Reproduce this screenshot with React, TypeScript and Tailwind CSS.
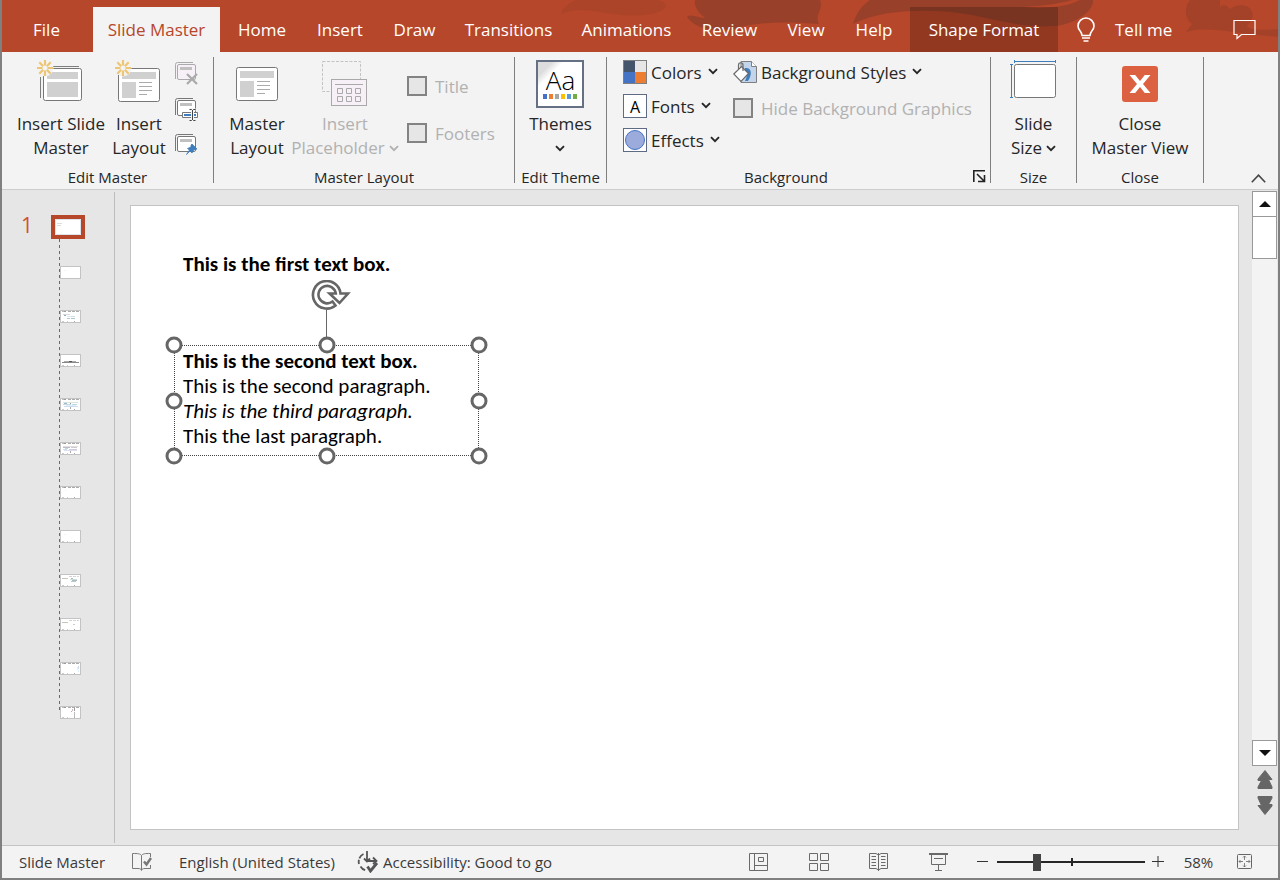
import type { ReactNode } from 'react'
import clsx from 'clsx'

const tabs = [
    { name: 'Home', width: 'w-20' },
    { name: 'Insert', width: 'w-[76px]' },
    { name: 'Draw', width: 'w-[73px]' },
    { name: 'Transitions', width: 'w-[115px]' },
    { name: 'Animations', width: 'w-[121px]' },
    { name: 'Review', width: 'w-[85px]' },
    { name: 'View', width: 'w-[68px]' },
    { name: 'Help', width: 'w-[68px]' },
]

// Tiny marks drawn on each layout thumbnail: x, y, width, height, colour
type Mark = [number, number, number, number, string]

const header: Mark[] = [
    [1, 0, 2, 1, '#bbb'],
    [3, 0, 2, 1, '#999'],
    [7, 0, 3, 1, '#aaa'],
    [11, 0, 3, 1, '#aaa'],
    [15, 0, 3, 1, '#aaa'],
]
const footer: Mark[] = [
    [1, 10, 2, 1, '#ccc'],
    [6, 10, 1, 1, '#ccc'],
    [13, 10, 1, 1, '#aaa'],
]
const topRight: Mark[] = [
    [8, 1, 3, 1, '#d4d4d8'],
    [12, 1, 3, 1, '#d4d4d8'],
    [16, 1, 2, 1, '#d4d4d8'],
]

const layouts: { name: string; marks: Mark[] }[] = [
    { name: 'Title Slide', marks: [[3, 3, 2, 1, '#f4f4f4']] },
    {
        name: 'Title and Content',
        marks: [...header, [2, 3, 7, 1, '#d8d8d8'], [3, 4, 2, 1, '#8ab'], [6, 5, 4, 1, '#dee8ee'], [10, 5, 4, 1, '#cde0e0'], [6, 7, 3, 1, '#acc8d8'], [10, 7, 4, 1, '#abc8d8'], ...footer],
    },
    {
        name: 'Section Header',
        marks: [[3, 6, 12, 1, '#aaa'], [1, 7, 17, 1, '#888'], [8, 6, 3, 1, '#555'], ...footer],
    },
    {
        name: 'Two Content',
        marks: [...header, [2, 3, 15, 1, '#d8e4e0'], [3, 4, 3, 1, '#9bc'], [9, 4, 1, 1, '#999'], [2, 5, 8, 1, '#cdd8e0'], [11, 5, 5, 1, '#bcd8dc'], [5, 6, 10, 1, '#def'], [3, 7, 14, 1, '#cde'], [9, 8, 1, 2, '#aaa'], ...footer],
    },
    {
        name: 'Comparison',
        marks: [...header, [2, 3, 15, 1, '#e8dddd'], [2, 4, 7, 1, '#bbc'], [10, 4, 6, 1, '#ccc'], [4, 5, 3, 1, '#bcd8e0'], [2, 6, 4, 1, '#cde'], [8, 6, 8, 1, '#ccd'], [3, 7, 13, 1, '#dde'], [9, 8, 1, 2, '#aaa'], ...footer],
    },
    { name: 'Title Only', marks: [...header, [4, 3, 1, 1, '#eee'], ...footer] },
    { name: 'Blank', marks: [[3, 3, 2, 1, '#f4f4f4'], ...footer] },
    {
        name: 'Content with Caption',
        marks: [...topRight, [1, 3, 6, 1, '#c8c6b8'], [10, 3, 2, 1, '#bba'], [9, 4, 7, 1, '#cdd'], [11, 5, 5, 1, '#abb8c0'], [10, 6, 5, 1, '#bcc'], ...footer],
    },
    { name: 'Picture with Caption', marks: [...topRight, [1, 3, 6, 1, '#c8c6b8'], [12, 5, 2, 1, '#ccc'], ...footer] },
    {
        name: 'Title and Vertical Text',
        marks: [...header, [17, 3, 1, 3, '#cde'], [16, 4, 1, 3, '#def'], [17, 7, 1, 2, '#def'], ...footer],
    },
    {
        name: 'Vertical Title and Text',
        marks: [...header, [11, 2, 1, 2, '#cbb'], [10, 4, 1, 1, '#baa'], [13, 1, 1, 3, '#999'], [13, 5, 1, 5, '#bbb'], ...footer],
    },
]

const handles = [
    'left-0 top-0',
    'left-1/2 top-0',
    'left-full top-0',
    'left-0 top-1/2',
    'left-full top-1/2',
    'left-0 top-full',
    'left-1/2 top-full',
    'left-full top-full',
]

function Chevron({ className }: { className?: string }) {
    return (
        <svg viewBox="0 0 10 8" className={clsx('inline-block h-2 w-2.5', className)} fill="none" stroke="currentColor" strokeWidth="1.9">
            <path d="M1 1.2 5 5.2 9 1.2" />
        </svg>
    )
}

function Spark() {
    return (
        <g stroke="#edc674" strokeWidth="2.2">
            <path d="M8 0v5.500M8 10.500V16M0 8h5.500M10.500 8H16M2.300 2.300 6.200 6.200M9.800 9.800 13.700 13.700M13.700 2.300 9.800 6.200M6.200 9.800 2.300 13.700" />
        </g>
    )
}

function InsertMasterIcon() {
    return (
        <svg viewBox="0 0 48 48" className="size-12" fill="none">
            <path d="M16 6.500H42M3.500 17V38" stroke="#7f7f7f" />
            <rect x="6.500" y="8.500" width="38" height="32" rx="2" fill="#fff" stroke="#777" />
            <path d="M10 12H41V19H10ZM10 22H41V37H10Z" fill="#d0d0d0" />
            <circle cx="8" cy="8" r="8.500" fill="#f3f3f3" />
            <Spark />
        </svg>
    )
}

function LayoutArt() {
    return (
        <>
            <rect x=".5" y=".5" width="41" height="33" rx="2" fill="#fff" stroke="#777" />
            <path d="M4 4H38V11H4ZM4 14H18V30H4Z" fill="#d0d0d0" />
            <path d="M21 14.500H34M21 18.500H34M21 22.500H34M21 26.500H29" stroke="#ababab" />
        </>
    )
}

function InsertLayoutIcon() {
    return (
        <svg viewBox="0 0 48 48" className="size-12" fill="none">
            <g transform="translate(3 8)">
                <LayoutArt />
            </g>
            <circle cx="8" cy="8" r="8.500" fill="#f3f3f3" />
            <Spark />
        </svg>
    )
}

function PlaceholderIcon() {
    return (
        <svg viewBox="0 0 48 48" className="size-12" fill="none">
            <rect x="1.500" y="1.500" width="38" height="30" stroke="#c3c3c3" strokeDasharray="3 1.500" />
            <rect x="10.500" y="19.500" width="35" height="26" fill="#f7f1f7" stroke="#a9a9a9" />
            <path d="M14 24.500H42" stroke="#a9a9a9" />
            <path d="M16.500 28.500h5v5h-5zM25.500 28.500h5v5h-5zM34.500 28.500h5v5h-5zM16.500 36.500h5v5h-5zM25.500 36.500h5v5h-5zM34.500 36.500h5v5h-5z" stroke="#a9a9a9" />
        </svg>
    )
}

function StackedSlides({ color, children, label, disabled }: { color: string; children: ReactNode; label: string; disabled?: boolean }) {
    return (
        <button aria-label={label} disabled={disabled}>
            <svg viewBox="0 0 24 24" className="block size-6" fill="none">
                <path d="M.500 17V2.500A2 2 0 0 1 2.500.500H18" stroke={color} />
                <rect x="2.500" y="2.500" width="18" height="15" rx="1.500" fill={disabled ? '#f7f1f7' : '#fff'} stroke={color} />
                <path d="M5 5h12v3H5z" fill="#c0c0c0" />
                {children}
            </svg>
        </button>
    )
}

function BigButton({ icon, lines, className, arrow, disabled }: { icon: ReactNode; lines: string[]; className?: string; arrow?: boolean; disabled?: boolean }) {
    return (
        <button disabled={disabled} className={clsx('flex flex-col items-center text-[17px] leading-6 whitespace-nowrap disabled:text-[#b1b1b1]', className)}>
            <span className="mb-1 flex h-12 items-center justify-center">{icon}</span>
            {lines.map((line, i) => (
                <span key={i}>
                    {line}
                    {arrow && i === lines.length - 1 && <Chevron className={line ? 'ml-1 align-middle' : 'align-middle'} />}
                </span>
            ))}
        </button>
    )
}

function SmallButton({ icon, label }: { icon: ReactNode; label: string }) {
    return (
        <button className="flex h-6 items-center gap-1 text-[17px] leading-6 whitespace-nowrap">
            {icon}
            <span className="pt-0.5">{label}</span>
            <Chevron className="ml-0.5" />
        </button>
    )
}

function Check({ label }: { label: string }) {
    return (
        <label className="flex h-6 items-center gap-2 text-[17px] leading-6 whitespace-nowrap text-[#b1b1b1]">
            <input type="checkbox" disabled className="size-5 shrink-0 appearance-none border-2 border-[#838383] bg-[#e6e6e6]" />
            <span className="pt-0.5">{label}</span>
        </label>
    )
}

function Group({ name, className, children, launcher }: { name: string; className: string; children: ReactNode; launcher?: boolean }) {
    return (
        <section aria-label={name} className={clsx('flex shrink-0 flex-col border-r border-[#7f7f7f]', className)}>
            <div className="flex h-[113px] items-start pt-[3px]">{children}</div>
            <div className="flex h-[13px] items-center">
                <h2 className="flex-1 text-center text-[15px] leading-4 whitespace-nowrap">{name}</h2>
                {launcher && (
                    <button aria-label="Format Background" className="mr-1 ml-2">
                        <svg viewBox="0 0 13 13" className="block size-[13px]" fill="none" stroke="#222" strokeWidth="1.600">
                            <path d="M.8 12V.8H12M4 4l7 7M11.500 5v6.500H5" />
                        </svg>
                    </button>
                )}
            </div>
        </section>
    )
}

function TitleBar() {
    return (
        <header className="relative h-13 overflow-hidden bg-[#b7472a] text-white">
            <svg viewBox="560 0 716 52" className="absolute top-0 right-0 h-13 w-[716px]" fill="#98402a">
                <path d="M560 10C566 4 572 0 575 0H655C670 3 664 11 650 14C630 18 610 14 590 11C575 9 566 11 560 14Z" opacity=".35" />
                <path d="M693 0H818C822 9 812 15 817 24C790 22 760 21 735 28C715 34 693 29 685 17C688 13 697 18 703 18C695 11 692 6 693 0Z" />
                <path d="M868 0H1091C1092 9 1080 20 1060 25C1030 30 1000 21 970 15C930 8 880 9 851 24C854 14 859 6 868 0Z" />
                <path d="M1020 7C1045 9 1065 7 1078 0H1070C1055 4 1040 6 1020 7Z" fill="#b7472a" />
                <path d="M1188 0C1180 10 1185 21 1190 24L1184 32C1205 25 1235 34 1276 37V29C1265 30 1248 31 1245 26C1256 15 1249 5 1239 5C1233 5 1230 8 1228 9C1224 4 1220 5 1218 7V0Z" opacity=".6" />
            </svg>
            <nav className="relative flex h-full items-end text-[17px] whitespace-nowrap">
                <button className="h-[45px] w-[91px] pr-0.5">File</button>
                <button className="h-[45px] w-[127px] bg-[#f3f3f3] text-[#b7472a]">Slide Master</button>
                {tabs.map((tab) => (
                    <button key={tab.name} className={clsx('h-[45px]', tab.width, tab.name === 'Home' && 'ml-0.5')}>
                        {tab.name}
                    </button>
                ))}
                <button className="ml-0.5 h-[45px] w-[148px] bg-black/20">Shape Format</button>
                <button className="ml-[19px] flex h-[45px] items-center gap-5">
                    <svg viewBox="0 0 18 25" className="h-[25px] w-[18px]" fill="none" stroke="#fff" strokeWidth="1.600">
                        <path d="M5 18.500C5 14 1 13.500 1 9A8 8 0 0 1 17 9C17 13.500 13 14 13 18.500ZM5 21H13M6.500 24H11.500" />
                    </svg>
                    Tell me
                </button>
                <button aria-label="Comments" className="mr-[22px] ml-auto flex h-[45px] items-center">
                    <svg viewBox="0 0 23 21" className="h-[21px] w-[23px]" fill="none" stroke="#fff" strokeWidth="1.200">
                        <path d="M1 1.500H22V15.500H8.500L4 19.500V15.500H1Z" />
                    </svg>
                </button>
            </nav>
        </header>
    )
}

function Ribbon() {
    return (
        <div className="flex h-[138px] border-b border-[#cdcdcd] bg-[#f3f3f3] pt-[5px] pb-1.5">
            <Group name="Edit Master" className="w-[212px]">
                <BigButton icon={<InsertMasterIcon />} lines={['Insert Slide', 'Master']} className="ml-3 w-[94px]" />
                <BigButton icon={<InsertLayoutIcon />} lines={['Insert', 'Layout']} className="w-[62px]" />
                <div className="ml-[5px] flex flex-col gap-3 pt-0.5">
                    <StackedSlides label="Delete Slide" color="#aaa" disabled>
                        <path d="M12 12 22 22M22 12 12 22" stroke="#aaa" strokeWidth="2.200" />
                    </StackedSlides>
                    <StackedSlides label="Rename" color="#777">
                        <path d="M7.500 14.500H22.500V19.500H7.500Z" fill="#fff" stroke="#777" />
                        <path d="M9 16H21V18H9Z" fill="#3f7dbd" />
                        <path d="M14.500 11.500H16.500L17.500 12.500 18.500 11.500H20.500M17.500 12V22M14.500 22.500H16.500L17.500 21.500 18.500 22.500H20.500" stroke="#f3f3f3" strokeWidth="3" />
                        <path d="M14.500 11.500H16.500L17.500 12.500 18.500 11.500H20.500M17.500 12V22M14.500 22.500H16.500L17.500 21.500 18.500 22.500H20.500" stroke="#444" />
                    </StackedSlides>
                    <StackedSlides label="Preserve" color="#777">
                        <path d="M17 10 22 15 20.500 15.500 19 15.500 17 19 15 17 11.500 20.500 14.500 16 12.500 14.500 16 13 16 11Z" fill="#3f7dbd" stroke="#3f7dbd" strokeWidth=".8" />
                    </StackedSlides>
                </div>
            </Group>
            <Group name="Master Layout" className="w-[301px]">
                <BigButton
                    icon={
                        <svg viewBox="0 0 42 34" className="h-[34px] w-[42px]" fill="none">
                            <LayoutArt />
                        </svg>
                    }
                    lines={['Master', 'Layout']}
                    className="ml-3 w-[62px]"
                />
                <BigButton icon={<PlaceholderIcon />} lines={['Insert', 'Placeholder']} arrow disabled className="w-[114px]" />
                <div className="ml-[5px] flex flex-col gap-[23px] pt-3.5">
                    <Check label="Title" />
                    <Check label="Footers" />
                </div>
            </Group>
            <Group name="Edit Theme" className="w-[92px] items-center">
                <BigButton
                    icon={
                        <span className="flex size-12 flex-col items-center border-2 border-[#667085] bg-[linear-gradient(135deg,#ddd_0_10px,#fff_18px)]">
                            <span className="h-8 font-['Open_Sans',sans-serif] text-[26px] leading-9 font-light text-black">Aa</span>
                            <svg viewBox="0 0 34 5" className="h-[5px] w-[34px]">
                                <path d="M0 0h4v5H0z" fill="#4472c4" />
                                <path d="M6 0h4v5H6z" fill="#ed7d31" />
                                <path d="M12 0h4v5h-4z" fill="#a5a5a5" />
                                <path d="M18 0h4v5h-4z" fill="#ffc000" />
                                <path d="M24 0h4v5h-4z" fill="#5b9bd5" />
                                <path d="M30 0h4v5h-4z" fill="#70ad47" />
                            </svg>
                        </span>
                    }
                    lines={['Themes', '']}
                    arrow
                    className="w-full"
                />
            </Group>
            <Group name="Background" className="w-[384px]" launcher>
                <div className="ml-4 flex w-[110px] flex-col items-start gap-2.5">
                    <SmallButton
                        label="Colors"
                        icon={
                            <svg viewBox="0 0 24 24" className="size-6">
                                <path d="M0 0h24v24H0z" fill="#7f7f7f" />
                                <path d="M1 1h11v11H1z" fill="#44546a" />
                                <path d="M12 1h11v11H12z" fill="#e7e6e6" />
                                <path d="M1 12h11v11H1z" fill="#4472c4" />
                                <path d="M12 12h11v11H12z" fill="#ed7d31" />
                            </svg>
                        }
                    />
                    <SmallButton label="Fonts" icon={<span className="size-6 border border-[#5f6b85] bg-white text-center text-base leading-6 text-black">A</span>} />
                    <SmallButton
                        label="Effects"
                        icon={
                            <svg viewBox="0 0 24 24" className="size-6">
                                <rect x=".5" y=".5" width="23" height="23" fill="#fff" stroke="#5f6b85" />
                                <circle cx="12" cy="12" r="9.500" fill="#9bacdc" stroke="#4472c4" />
                            </svg>
                        }
                    />
                </div>
                <div className="flex flex-col items-start gap-3">
                    <SmallButton
                        label="Background Styles"
                        icon={
                            <svg viewBox="0 0 24 24" className="size-6" fill="none">
                                <path d="M8 1.500H18.500L23.500 6.500V22.500H8Z" fill="#c3d5ea" stroke="#7f7f7f" />
                                <path d="M18.500 1.500V6.500H23.500" fill="#fff" stroke="#7f7f7f" />
                                <path d="M12 8C18 7 20 13 15 21H12C14 17 15 13 12 11Z" fill="#3f7dbd" />
                                <path d="M.800 14 8.500 6.500 15.500 13.500 8 21.500Z" fill="#fff" stroke="#6b6b6b" strokeWidth="1.200" />
                                <path d="M5.500 9V5C5.500 2 10 2 10 5V11" stroke="#6b6b6b" strokeWidth="1.200" />
                            </svg>
                        }
                    />
                    <Check label="Hide Background Graphics" />
                </div>
            </Group>
            <Group name="Size" className="w-[86px] items-center">
                <BigButton
                    icon={
                        <svg viewBox="1 1 48 48" className="size-12" fill="none">
                            <rect x="5.500" y="5.500" width="41" height="33" rx="2" fill="#fff" stroke="#777" />
                            <path d="M5.500 2.500H46.500M5.500 1V4M46.500 1V4M2.500 5.500V38.500M1 5.500H4M1 38.500H4" stroke="#3f7dbd" />
                        </svg>
                    }
                    lines={['Slide', 'Size']}
                    arrow
                    className="w-full"
                />
            </Group>
            <Group name="Close" className="w-[127px] items-center">
                <BigButton
                    icon={
                        <svg viewBox="0 0 36 36" className="size-9">
                            <rect width="36" height="36" rx="3" fill="#dc6141" />
                            <path d="M7.500 9H13.200L18 15 22.800 9H28.500L21 18 28.500 27H22.800L18 21 13.200 27H7.500L15 18Z" fill="#fff" />
                        </svg>
                    }
                    lines={['Close', 'Master View']}
                    className="w-full"
                />
            </Group>
            <button aria-label="Collapse the Ribbon" className="mr-3 ml-auto self-end">
                <svg viewBox="0 0 15 9" className="block h-[9px] w-[15px]" fill="none" stroke="#444" strokeWidth="1.600">
                    <path d="M.8 8.200 7.500 1.200 14.200 8.200" />
                </svg>
            </button>
        </div>
    )
}

function Thumbnails() {
    return (
        <aside className="my-0.5 flex w-[113px] shrink-0 gap-[18px] border-r border-[#bdbdbd] pt-[23px] pl-[19px]">
            <span className="h-6 w-3 text-[21px] leading-5 text-[#d0512e]">1</span>
            <div>
                <button aria-label="Slide Master" className="block h-6 w-[34px] border-4 border-[#b7472a] bg-white">
                    <svg viewBox="0 0 26 16" className="h-4 w-[26px]">
                        <path d="M.5.5h25v15H.5z" fill="none" stroke="#dfe3ec" />
                        <path d="M2 4h5v1H2zM2 6h4v1H2z" fill="#ddd" />
                    </svg>
                </button>
                <ul className="ml-2 flex flex-col gap-[31px] bg-[repeating-linear-gradient(to_bottom,#6a6a6a_0_3px,transparent_3px_6px)] bg-[length:1px_473px] bg-no-repeat pt-[27px] pl-px">
                    {layouts.map((layout) => (
                        <li key={layout.name} className="h-[13px]">
                            <button aria-label={layout.name} className="block h-[13px] w-[21px] border border-[#c3c3c3] bg-white">
                                <svg viewBox="0 0 19 11" className="h-[11px] w-[19px]" shapeRendering="crispEdges">
                                    {layout.marks.map(([x, y, w, h, fill], i) => (
                                        <rect key={i} x={x} y={y} width={w} height={h} fill={fill} />
                                    ))}
                                </svg>
                            </button>
                        </li>
                    ))}
                </ul>
            </div>
        </aside>
    )
}

function Slide() {
    return (
        <main className="relative mx-[15px] mr-[13px] my-[15px] flex-1 border border-[#c3c3c3] bg-white font-['Carlito','Lato',sans-serif] text-[21px] leading-[25px] text-black">
            <p className="absolute top-[46px] left-13 font-bold whitespace-nowrap">This is the first text box.</p>
            <div className="absolute top-[139px] left-[43px] h-[111px] w-[305px] border border-dotted border-[#444] pt-[3px] pl-2 whitespace-nowrap">
                <p className="font-bold">This is the second text box.</p>
                <p>This is the second paragraph.</p>
                <p className="italic">This is the third paragraph.</p>
                <p>This the last paragraph.</p>
                <svg viewBox="0 0 40 66" className="absolute bottom-full left-1/2 -ml-4 h-[66px] w-10" fill="none" stroke="#666">
                    <path d="M15.500 30V66" />
                    <path
                        d="M29.500 13.500A13.800 13.800 0 1 0 24.500 25.500L21.500 21.500A8.700 8.700 0 1 1 24.800 13.500H18.500L28.500 23 37 13.500Z"
                        fill="#fff"
                        strokeWidth="2.600"
                    />
                </svg>
                <div className="absolute -inset-px">
                    {handles.map((place) => (
                        <span key={place} className={clsx('absolute size-[17px] -translate-1/2 rounded-full border-3 border-[#666] bg-white', place)} />
                    ))}
                </div>
            </div>
        </main>
    )
}

function ScrollBar() {
    return (
        <div className="mr-px flex w-[25px] shrink-0 flex-col items-center pt-px pb-[30px]">
            <div className="flex w-full flex-1 flex-col bg-[#f3f3f3]">
                <button aria-label="Scroll up" className="flex h-[26px] items-center justify-center border border-[#999] bg-white">
                    <svg viewBox="0 0 12 6" className="h-1.5 w-3" fill="#111">
                        <path d="M0 6 6 0 12 6Z" />
                    </svg>
                </button>
                <div className="-mt-px h-[43px] border border-[#999] bg-white" />
                <button aria-label="Scroll down" className="mt-auto flex h-[26px] items-center justify-center border border-[#999] bg-white">
                    <svg viewBox="0 0 12 6" className="h-1.5 w-3" fill="#111">
                        <path d="M0 0H12L6 6Z" />
                    </svg>
                </button>
            </div>
            <button aria-label="Previous Slide" className="mt-1">
                <svg viewBox="0 0 16 19" className="block h-[19px] w-4" fill="#666" stroke="#666" strokeLinejoin="round">
                    <path d="M8 .500 15 9.500H11.500L15 17V18.500H1V17L4.500 10.500H1V9Z" />
                </svg>
            </button>
            <button aria-label="Next Slide" className="mt-[7px]">
                <svg viewBox="0 0 16 19" className="block h-[19px] w-4 rotate-180" fill="#666" stroke="#666" strokeLinejoin="round">
                    <path d="M8 .500 15 9.500H11.500L15 17V18.500H1V17L4.500 10.500H1V9Z" />
                </svg>
            </button>
        </div>
    )
}

function ViewButton({ label, children }: { label: string; children: ReactNode }) {
    return (
        <button aria-label={label} className="mr-10">
            <svg viewBox="0 0 20 20" className="block size-5" fill="none" stroke="#6a6a6a">
                {children}
            </svg>
        </button>
    )
}

function StatusBar() {
    return (
        <footer className="flex h-[33px] items-center border-t border-[#c3c3c3] bg-[#f3f3f3] pr-[25px] pl-[17px] text-[15px] whitespace-nowrap text-[#3a3a3a]">
            <span className="w-28">Slide Master</span>
            <button aria-label="Spelling" className="w-12">
                <svg viewBox="0 0 21 20" className="block h-5 w-[21px]" fill="none" stroke="#777">
                    <path d="M10.500 3.500C9 1.500 7 1.500 1.500 1.500V16.500H7C9 16.500 10 17 10.500 18.500C11 17 12 16.500 14 16.500H19.500V13M10.500 3.500V18M10.500 3.500C12 1.500 14 1.500 19.500 1.500V5" />
                    <path d="M13 9.500 15.500 12.500 20 6" strokeWidth="2.500" />
                </svg>
            </button>
            <button className="w-[178px] text-left">English (United States)</button>
            <button className="flex items-center gap-1">
                <svg viewBox="0 0 22 22" className="size-[22px]" fill="none" stroke="#555" strokeWidth="1.800">
                    <path d="M6.500 3A8.500 8.500 0 0 0 2 13M3.500 15.500A8.500 8.500 0 0 0 9.500 19.500" strokeDasharray="6 1.500" />
                    <path d="M10 0V10M7 7.500 10 10.500 13 7.500M9 10H18M16 6.500 19.500 10 16 13" />
                    <path d="M10.500 15.500 13.500 20 20 12" strokeWidth="2.800" />
                </svg>
                Accessibility: Good to go
            </button>
            <div className="ml-auto flex items-center">
                <ViewButton label="Normal">
                    <path d="M.5 1.500H18.500V18.500H.500ZM5.500 1.500V18.500M5.500 13.500H18.500M9.500 5.500H14.500V9.500H9.500Z" />
                </ViewButton>
                <ViewButton label="Slide Sorter">
                    <path d="M.5 1.500H8.500V8.500H.500ZM11.500 1.500H19.500V8.500H11.500ZM.500 11.500H8.500V18.500H.500ZM11.500 11.500H19.500V18.500H11.500Z" />
                </ViewButton>
                <ViewButton label="Reading View">
                    <path d="M.5 1.500H7L9.500 3 12 1.500H18.500V16.500H12L9.500 18 7 16.500H.500ZM9.500 1V19M2.500 4.500H7M2.500 7.500H7M2.500 10.500H7M2.500 13.500H7M12 4.500H16.500M12 7.500H16.500M12 10.500H16.500M12 13.500H16.500" />
                </ViewButton>
                <ViewButton label="Slide Show">
                    <path d="M0 2H19" strokeWidth="2" />
                    <path d="M2.500 2V12.500H16.500V2M5 6.500H14M9.500 12.500V18.500M6 18.500H13" />
                </ViewButton>
                <button aria-label="Zoom Out" className="-ml-3">
                    <svg viewBox="0 0 12 12" className="block size-3" stroke="#333">
                        <path d="M0 5.500H11" />
                    </svg>
                </button>
                <div className="relative mr-[7px] ml-2 h-5 w-[148px]">
                    <span className="absolute top-[9px] left-0 h-0.5 w-full bg-[#262626]" />
                    <span className="absolute top-1.5 left-1/2 h-2 w-0.5 bg-[#262626]" />
                    <input
                        type="range"
                        aria-label="Zoom"
                        defaultValue={26}
                        className="relative block h-5 w-full appearance-none bg-transparent [&::-webkit-slider-thumb]:h-[17px] [&::-webkit-slider-thumb]:w-2 [&::-webkit-slider-thumb]:appearance-none [&::-webkit-slider-thumb]:bg-[#444]"
                    />
                </div>
                <button aria-label="Zoom In">
                    <svg viewBox="0 0 12 12" className="block size-3" stroke="#333">
                        <path d="M0 5.500H12M6 0V11" />
                    </svg>
                </button>
                <button className="w-[73px] pr-1 text-center">58%</button>
                <button aria-label="Fit slide to current window">
                    <svg viewBox="0 0 16 16" className="block size-4" fill="none" stroke="#666">
                        <rect x=".5" y=".5" width="14" height="14" rx="1" />
                        <path d="M7.500 2V6M7.500 9V13M2 7.500H6M9 7.500H13M6 3.500 7.500 2 9 3.500M6 11.500 7.500 13 9 11.500M3.500 6 2 7.500 3.500 9M11.500 6 13 7.500 11.500 9" strokeWidth=".8" />
                    </svg>
                </button>
            </div>
        </footer>
    )
}

export default function App() {
    return (
        <div className="flex h-screen flex-col border-x-2 border-b-2 border-[#808080] bg-[#e6e6e6] font-['Open_Sans',sans-serif] text-[#262626]">
            <TitleBar />
            <Ribbon />
            <div className="flex min-h-0 flex-1">
                <Thumbnails />
                <Slide />
                <ScrollBar />
            </div>
            <StatusBar />
        </div>
    )
}
